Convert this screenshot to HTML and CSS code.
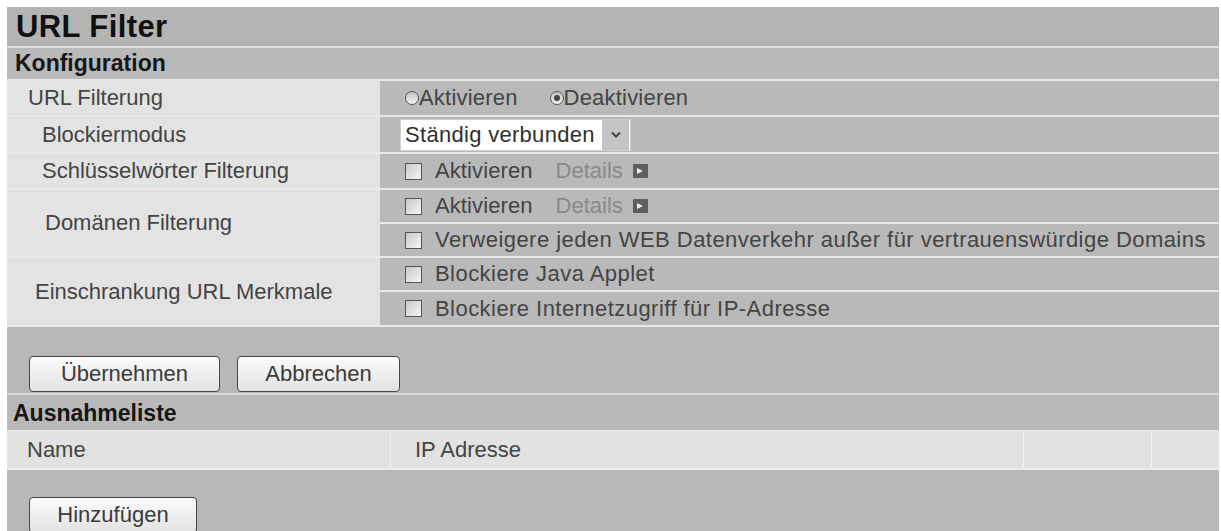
FILE: index.html
```html
<!doctype html>
<html>
<head>
	<title>URL Filter</title>
	<meta charset="utf-8"/>
	<link rel="stylesheet" href="styles.css">
</head>
<body>

<div class="panel">
	<h1 class="title">URL Filter</h1>
	<h2 class="section">Konfiguration</h2>

	<table class="config">
		<tr>
			<td class="label pad1">URL Filterung</td>
			<td class="value">
				<div class="cell h34">
					<span class="radio"></span><span class="rtext">Aktivieren</span>
					<span class="radio on"></span><span class="rtext">Deaktivieren</span>
				</div>
			</td>
		</tr>
		<tr>
			<td class="label pad2">Blockiermodus</td>
			<td class="value sel">
				<div class="cell h35">
					<div class="select">
						<span class="selText">Ständig verbunden</span>
						<span class="selArrow"><svg width="10" height="7" viewBox="0 0 10 7"><path d="M1 1.5 L5 5.5 L9 1.5" fill="none" stroke="#444" stroke-width="2"/></svg></span>
					</div>
				</div>
			</td>
		</tr>
		<tr>
			<td class="label pad2">Schlüsselwörter Filterung</td>
			<td class="value">
				<div class="cell h34">
					<span class="check"></span><span class="ctext short">Aktivieren</span>
					<span class="details">Details</span><span class="more"><svg width="8" height="8" viewBox="0 0 8 8"><path d="M1 1 L7 4 L1 7 Z" fill="#eee"/></svg></span>
				</div>
			</td>
		</tr>
		<tr>
			<td class="label pad3" rowspan="2">Domänen Filterung</td>
			<td class="value">
				<div class="cell h32">
					<span class="check"></span><span class="ctext short">Aktivieren</span>
					<span class="details">Details</span><span class="more"><svg width="8" height="8" viewBox="0 0 8 8"><path d="M1 1 L7 4 L1 7 Z" fill="#eee"/></svg></span>
				</div>
			</td>
		</tr>
		<tr>
			<td class="value">
				<div class="cell h32">
					<span class="check"></span><span class="ctext">Verweigere jeden WEB Datenverkehr außer für vertrauenswürdige Domains</span>
				</div>
			</td>
		</tr>
		<tr>
			<td class="label pad4" rowspan="2">Einschrankung URL Merkmale</td>
			<td class="value">
				<div class="cell h32">
					<span class="check"></span><span class="ctext">Blockiere Java Applet</span>
				</div>
			</td>
		</tr>
		<tr>
			<td class="value">
				<div class="cell h33">
					<span class="check"></span><span class="ctext">Blockiere Internetzugriff für IP-Adresse</span>
				</div>
			</td>
		</tr>
	</table>

	<div class="actions">
		<button class="btn wide">Übernehmen</button>
		<button class="btn">Abbrechen</button>
	</div>

	<h2 class="section second">Ausnahmeliste</h2>

	<div class="listHead">
		<div class="col colName">Name</div>
		<div class="col colIp">IP Adresse</div>
		<div class="col colA"></div>
		<div class="col colB"></div>
	</div>

	<div class="addArea">
		<button class="btn add">Hinzufügen</button>
	</div>
</div>

</body>
</html>
```

FILE: styles.css
```css
* {
    box-sizing: border-box;
}

body {
    margin: 0;
    background-color: #fff;
    font-family: "Liberation Sans", Arial, Helvetica, sans-serif;
    overflow: hidden;
}

.panel {
    margin: 7px 0 0 7px;
    width: 1212px;
    background-color: #b8b8b8;
}

.title {
    margin: 0;
    height: 41px;
    line-height: 40px;
    padding-left: 9px;
    font-size: 31px;
    letter-spacing: 0.4px;
    font-weight: bold;
    color: #111;
    background-color: #b4b4b4;
    border-bottom: 2px solid #dedede;
}

.section {
    margin: 0;
    height: 33px;
    line-height: 31px;
    padding-left: 8px;
    font-size: 23px;
    font-weight: bold;
    color: #161616;
    background-color: #b9b9b9;
    border-bottom: 2px solid #e8e8e8;
}

.section.second {
    height: 39px;
    line-height: 36px;
    padding-left: 6px;
    border-top: 2px solid #d6d6d6;
}

/* config table */
.config {
    width: 100%;
    border-collapse: separate;
    border-spacing: 0;
    table-layout: fixed;
}

.config td {
    padding: 0;
    font-size: 22px;
    color: #444;
    border-bottom: 2px solid #e9e9e9;
    vertical-align: middle;
}

.config td.label {
    width: 373px;
    background-color: #e3e3e3;
}

.config td.value {
    background-color: #b9b9b9;
    padding-left: 25px;
}

.config td.sel {
    padding-left: 20px;
}

.pad1 { padding-left: 21px !important; }
.pad2 { padding-left: 35px !important; }
.pad3 { padding-left: 38px !important; }
.pad4 { padding-left: 28px !important; }

.cell {
    display: flex;
    align-items: center;
}

.h32 { height: 32px; }
.h33 { height: 33px; }
.h34 { height: 34px; }
.h35 { height: 35px; }

.radio {
    display: inline-block;
    flex-shrink: 0;
    width: 14px;
    height: 14px;
    border: 1px solid #555;
    border-radius: 50%;
    background: linear-gradient(#c4c4c4, #f4f4f4);
    position: relative;
}

.radio.on::after {
    content: "";
    position: absolute;
    left: 3px;
    top: 3px;
    width: 6px;
    height: 6px;
    border-radius: 50%;
    background-color: #444;
}

.rtext {
    margin-left: 0;
    margin-right: 32px;
    letter-spacing: 0.2px;
}

.check {
    display: inline-block;
    flex-shrink: 0;
    width: 17px;
    height: 17px;
    border: 1px solid #555;
    background: linear-gradient(135deg, #c8c8c8, #f6f6f6);
}

.ctext {
    margin-left: 13px;
    letter-spacing: 0.45px;
    white-space: nowrap;
}

.ctext.short {
    letter-spacing: 0.1px;
}

.details {
    margin-left: 23px;
    color: #8a8a8a;
}

.more {
    display: inline-flex;
    align-items: center;
    justify-content: center;
    width: 15px;
    height: 14px;
    margin-left: 10px;
    background-color: #5e5e5e;
    border-radius: 1px;
}

.select {
    display: flex;
    align-items: center;
    width: 231px;
    height: 32px;
    background-color: #fff;
    border: 1px solid #cfcfcf;
}

.selText {
    flex: 1;
    padding-left: 4px;
    color: #303030;
    letter-spacing: 0.3px;
    white-space: nowrap;
}

.selArrow {
    display: flex;
    align-items: center;
    justify-content: center;
    width: 27px;
    height: 30px;
    margin-right: 1px;
    background-color: #c4c4c4;
}

/* buttons */
.actions {
    padding: 29px 0 1px 22px;
    display: flex;
    gap: 17px;
}

.btn {
    height: 36px;
    width: 163px;
    padding: 0;
    font-family: "Liberation Sans", Arial, Helvetica, sans-serif;
    font-size: 22px;
    color: #3a3a3a;
    background: linear-gradient(#fbfbfb, #e2e2e2);
    border: 1px solid #474747;
    border-radius: 4px;
}

.btn.wide {
    width: 191px;
}

.btn.add {
    width: 168px;
}

/* exception list */
.listHead {
    display: flex;
    height: 38px;
    background-color: #e2e2e2;
    border-bottom: 2px solid #ececec;
    font-size: 22px;
    color: #444;
}

.col {
    display: flex;
    align-items: center;
    border-right: 1px solid #f2f2f2;
}

.colName { width: 384px; padding-left: 20px; }
.colIp { width: 633px; padding-left: 24px; }
.colA { width: 128px; }
.colB { flex: 1; border-right: none; }

.addArea {
    padding: 27px 0 20px 22px;
}
```
